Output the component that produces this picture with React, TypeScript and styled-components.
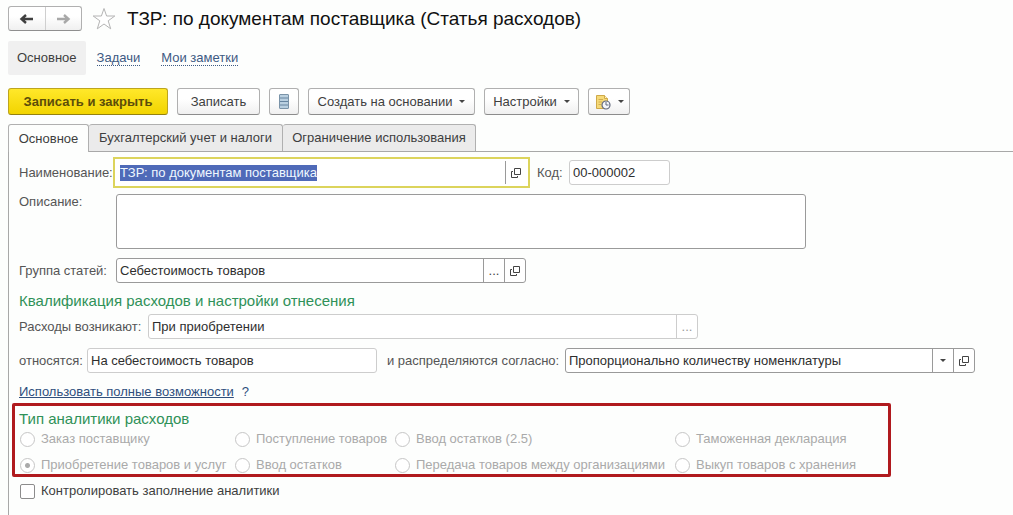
import React, { useEffect, useRef } from "react";
import styled, { createGlobalStyle, css } from "styled-components";

const GlobalStyle = createGlobalStyle`
  *, *::before, *::after { box-sizing: border-box; }
  html, body, #root { min-height: 100vh; }
  body {
    margin: 0;
    background: #fdfefd;
    color: #3e3e3e;
    font: 13px/16px "Liberation Sans", Arial, sans-serif;
  }
  #root { display: flex; }
  button, input, select, textarea { font: inherit; color: inherit; margin: 0; }
  h1, h2, p { margin: 0; font-weight: normal; }
`;

const Page = styled.div`
  flex: 1;
  min-width: 0;
  display: flex;
  flex-direction: column;
  padding: 6px 0 0 8px;
`;

const Header = styled.header`
  display: flex;
  align-items: center;
  height: 25px;
`;

const History = styled.div`
  display: flex;
  width: 74px;
  height: 25px;
  border: 1px solid #b0b0b0;
  border-bottom-color: #8f8f8f;
  border-radius: 3px;
  background: linear-gradient(#fff 40%, #f0f0f0);
`;

const HistoryButton = styled.button`
  flex: 1;
  display: flex;
  align-items: center;
  justify-content: center;
  padding: 0;
  border: 0;
  background: none;
  color: #404040;
  & + & {
    border-left: 1px solid #cfcfcf;
    color: #a8a8a8;
  }
`;

const StarButton = styled.button`
  display: flex;
  margin: 0 11px 0 10px;
  padding: 0;
  border: 0;
  background: none;
`;

const Title = styled.h1`
  color: #111;
  font-size: 19px;
  line-height: 24px;
`;

const Sections = styled.nav`
  display: flex;
  align-items: center;
  margin-top: 10px;
  height: 34px;
`;

const CurrentSection = styled.span`
  padding: 9px;
  margin-right: 11px;
  background: #f0f0f0;
  border-radius: 2px;
`;

const SectionLink = styled.a`
  margin-right: 21px;
  color: #3d5a83;
  text-decoration: none;
  line-height: 14px;
  border-bottom: 1px dotted #3d5a83;
`;

const Toolbar = styled.div`
  display: flex;
  gap: 9px;
  margin-top: 13px;
`;

const ToolButton = styled.button<{ $width: number; $primary?: boolean }>`
  display: flex;
  align-items: center;
  justify-content: center;
  gap: 7px;
  flex: 0 0 ${(p) => p.$width}px;
  height: 27px;
  padding: 0;
  border: 1px solid #b0b0b0;
  border-bottom-color: #8c8c8c;
  border-radius: 3px;
  background: linear-gradient(#fff 40%, #f0f0f0);
  white-space: nowrap;
  ${(p) =>
    p.$primary &&
    css`
      border-color: #bda51e;
      border-bottom-color: #94810f;
      background: linear-gradient(#ffe82a, #f2d400);
      color: #5c4d0a;
      font-weight: bold;
    `}
`;

const Caret = styled.span`
  border: 3px solid transparent;
  border-top-color: #444;
  border-bottom: 0;
`;

const Tabs = styled.div`
  display: flex;
  margin-top: 9px;
  border-bottom: 1px solid #a8a8a8;
`;

const Tab = styled.button<{ $width: number; $active?: boolean }>`
  flex: 0 0 ${(p) => p.$width}px;
  height: 27px;
  padding: 0;
  border: 1px solid #b0b0b0;
  border-width: 1px 1px 0 0;
  border-radius: 3px 3px 0 0;
  background: #ebebeb;
  ${(p) =>
    p.$active &&
    css`
      height: 28px;
      margin-bottom: -1px;
      border-left-width: 1px;
      background: #fdfefd;
    `}
`;

const Panel = styled.main`
  flex: 1;
  padding-top: 5px;
  border-left: 1px solid #a8a8a8;
`;

const Row = styled.div<{ $gap?: number; $top?: boolean }>`
  display: flex;
  align-items: ${(p) => (p.$top ? "flex-start" : "center")};
  margin-top: ${(p) => p.$gap ?? 0}px;
  padding-left: 10px;
`;

const Label = styled.label<{ $width: number; $indent?: number }>`
  flex: 0 0 ${(p) => p.$width}px;
  margin-left: ${(p) => p.$indent ?? 0}px;
  color: #555;
  white-space: nowrap;
`;

const Field = styled.div<{ $width: number; $muted?: boolean }>`
  display: flex;
  flex: 0 1 ${(p) => p.$width}px;
  min-width: 0;
  height: 25px;
  border: 1px solid ${(p) => (p.$muted ? "#cdcdcd" : "#9a9a9a")};
  border-radius: 3px;
  background: #fff;
  && > * + * {
    border-left: 1px solid ${(p) => (p.$muted ? "#cdcdcd" : "#9a9a9a")};
  }
`;

const FocusFrame = styled(Field)`
  height: 31px;
  margin-left: -3px;
  padding: 2px;
  border: 2px solid #dcd45c;
  border-radius: 0;
`;

const control = css`
  flex: 1;
  min-width: 0;
  padding: 0 3px;
  border: 0;
  outline: 0;
  background: none;
  color: #2e2e2e;
`;

const TextInput = styled.input`
  ${control}
  &::selection { background: #4f6ab8; color: #f0f8ff; }
`;

const Select = styled.select`
  ${control}
  appearance: none;
`;

const FieldButton = styled.button`
  display: flex;
  align-items: center;
  justify-content: center;
  flex: 0 0 21px;
  padding: 0;
  border: 0;
  background: none;
  color: #444;
  &:disabled { color: #999; }
`;

const CaretCell = styled.span`
  display: flex;
  align-items: center;
  justify-content: center;
  flex: 0 0 21px;
  pointer-events: none;
`;

const Description = styled.textarea`
  flex: 0 1 690px;
  min-width: 0;
  height: 55px;
  padding: 4px;
  border: 1px solid #9a9a9a;
  border-radius: 3px;
  background: #fff;
  resize: none;
`;

const sectionTitle = css`
  color: #2f9158;
  font-size: 15px;
  line-height: 20px;
`;

const Heading = styled.h2`
  ${sectionTitle}
  padding: 8px 0 3px 10px;
`;

const FullLink = styled.a`
  color: #2f4f7d;
`;

const HelpButton = styled.button`
  padding: 0;
  border: 0;
  margin-left: 8px;
  background: none;
  color: #2f4f7d;
`;

const Analytics = styled.fieldset`
  max-width: 879px;
  min-width: 0;
  margin: 3px 0 0 3px;
  padding: 3px 4px 1px;
  border: 3px solid #b01a1e;
  border-radius: 2px;
`;

const AnalyticsTitle = styled.h2`
  ${sectionTitle}
`;

const Options = styled.div`
  display: grid;
  grid-template-columns: 215px 160px 280px 1fr;
  row-gap: 10px;
  margin-top: 2px;
  padding-left: 1px;
`;

const Choice = styled.label<{ $muted?: boolean }>`
  display: flex;
  align-items: center;
  gap: 6px;
  color: ${(p) => (p.$muted ? "#aaa" : "#3e3e3e")};
  white-space: nowrap;
`;

const Radio = styled.input`
  appearance: none;
  width: 15px;
  height: 15px;
  border: 1px solid #c6c6c6;
  border-radius: 50%;
  background: #fff;
  &:checked { background: radial-gradient(circle, #aaa 2px, #fff 3px); }
`;

const Checkbox = styled.input`
  appearance: none;
  width: 15px;
  height: 15px;
  border: 1px solid #8c8c8c;
  border-radius: 2px;
  background: #fff;
`;

const CheckRow = styled.div`
  margin-top: 6px;
  padding-left: 11px;
`;

const Arrow = ({ flip }: { flip?: boolean }) => (
  <svg width="15" height="12" viewBox="0 0 15 12" aria-hidden="true">
    <path
      d={flip ? "M1 6H12M8 2L12.5 6L8 10" : "M14 6H3M7 2L2.5 6L7 10"}
      fill="none"
      stroke="currentColor"
      strokeWidth="2.4"
    />
  </svg>
);

const Star = () => (
  <svg width="24" height="24" viewBox="0 0 24 24" aria-hidden="true">
    <path
      d="M12 1.5L14.6 9H22.8L16.2 13.8L18.7 21.8L12 17L5.3 21.8L7.8 13.8L1.2 9H9.4Z"
      fill="#fff"
      stroke="#b4b4b4"
    />
  </svg>
);

const ListIcon = () => (
  <svg width="10" height="15" viewBox="0 0 10 15" aria-hidden="true">
    <rect x="0.5" y="0.5" width="9" height="14" rx="0.5" fill="#b9cfe0" stroke="#7a93a8" />
    <path d="M1 4H9M1 7.500H9M1 11H9" stroke="#6684a0" />
  </svg>
);

const ReportIcon = () => (
  <svg width="16" height="16" viewBox="0 0 16 16" aria-hidden="true">
    <path d="M1.500 1.500H9.500L12.500 4.500V14.500H1.500Z" fill="#f6da78" stroke="#cfa94a" />
    <path d="M9.500 1.500V4.500H12.500" fill="#fff3c4" stroke="#cfa94a" />
    <path d="M3.500 5.500H8M3.500 8H7M3.500 10.500H6" stroke="#d3ad50" />
    <circle cx="11" cy="11" r="4" fill="#f4f6fa" stroke="#61687c" strokeWidth="1.200" />
    <path d="M11 8V11H13.500" fill="none" stroke="#61687c" />
  </svg>
);

const OpenIcon = () => (
  <svg width="10" height="10" viewBox="0 0 10 10" aria-hidden="true" fill="none" stroke="#444">
    <path d="M3.500 0.500H9.500V6.500H3.500Z" />
    <path d="M2 3.500H0.500V9.500H6.500V8" />
  </svg>
);

const OpenButton = () => (
  <FieldButton type="button" aria-label="Открыть">
    <OpenIcon />
  </FieldButton>
);

const options = [
  "Заказ поставщику",
  "Поступление товаров",
  "Ввод остатков (2.5)",
  "Таможенная декларация",
  "Приобретение товаров и услуг",
  "Ввод остатков",
  "Передача товаров между организациями",
  "Выкуп товаров с хранения",
];

export default function App() {
  const nameRef = useRef<HTMLInputElement>(null);

  useEffect(() => {
    nameRef.current?.focus();
    nameRef.current?.select();
  }, []);

  return (
    <>
      <GlobalStyle />
      <Page>
        <Header>
          <History>
            <HistoryButton type="button" aria-label="Назад"><Arrow /></HistoryButton>
            <HistoryButton type="button" aria-label="Вперед"><Arrow flip /></HistoryButton>
          </History>
          <StarButton type="button" aria-label="В избранное"><Star /></StarButton>
          <Title>ТЗР: по документам поставщика (Статья расходов)</Title>
        </Header>

        <Sections>
          <CurrentSection>Основное</CurrentSection>
          <SectionLink href="#tasks">Задачи</SectionLink>
          <SectionLink href="#notes">Мои заметки</SectionLink>
        </Sections>

        <Toolbar>
          <ToolButton type="button" $width={160} $primary>Записать и закрыть</ToolButton>
          <ToolButton type="button" $width={83}>Записать</ToolButton>
          <ToolButton type="button" $width={30} aria-label="Список"><ListIcon /></ToolButton>
          <ToolButton type="button" $width={167} aria-haspopup="menu">
            Создать на основании <Caret />
          </ToolButton>
          <ToolButton type="button" $width={95} aria-haspopup="menu">
            Настройки <Caret />
          </ToolButton>
          <ToolButton type="button" $width={42} aria-haspopup="menu" aria-label="Отчеты">
            <ReportIcon /> <Caret />
          </ToolButton>
        </Toolbar>

        <Tabs role="tablist">
          <Tab type="button" role="tab" aria-selected $width={81} $active>Основное</Tab>
          <Tab type="button" role="tab" $width={194}>Бухгалтерский учет и налоги</Tab>
          <Tab type="button" role="tab" $width={193}>Ограничение использования</Tab>
        </Tabs>

        <Panel>
          <Row>
            <Label htmlFor="name" $width={97}>Наименование:</Label>
            <FocusFrame $width={417}>
              <TextInput id="name" ref={nameRef} defaultValue="ТЗР: по документам поставщика" />
              <OpenButton />
            </FocusFrame>
            <Label htmlFor="code" $width={32} $indent={7}>Код:</Label>
            <Field $width={101} $muted>
              <TextInput id="code" defaultValue="00-000002" />
            </Field>
          </Row>

          <Row $gap={6} $top>
            <Label htmlFor="description" $width={97}>Описание:</Label>
            <Description id="description" />
          </Row>

          <Row $gap={9}>
            <Label htmlFor="group" $width={97}>Группа статей:</Label>
            <Field $width={410}>
              <TextInput id="group" defaultValue="Себестоимость товаров" />
              <FieldButton type="button" aria-label="Выбрать">...</FieldButton>
              <OpenButton />
            </Field>
          </Row>

          <Heading>Квалификация расходов и настройки отнесения</Heading>

          <Row>
            <Label htmlFor="origin" $width={129}>Расходы возникают:</Label>
            <Field $width={550} $muted>
              <TextInput id="origin" readOnly defaultValue="При приобретении" />
              <FieldButton type="button" disabled aria-label="Выбрать">...</FieldButton>
            </Field>
          </Row>

          <Row $gap={9}>
            <Label htmlFor="target" $width={68}>относятся:</Label>
            <Field $width={290} $muted>
              <TextInput id="target" readOnly defaultValue="На себестоимость товаров" />
            </Field>
            <Label htmlFor="rule" $width={178} $indent={10}>и распределяются согласно:</Label>
            <Field $width={410}>
              <Select id="rule">
                <option>Пропорционально количеству номенклатуры</option>
              </Select>
              <CaretCell><Caret /></CaretCell>
              <OpenButton />
            </Field>
          </Row>

          <Row $gap={11}>
            <FullLink href="#full">Использовать полные возможности</FullLink>
            <HelpButton type="button" aria-label="Справка">?</HelpButton>
          </Row>

          <Analytics aria-labelledby="analytics-title">
            <AnalyticsTitle id="analytics-title">Тип аналитики расходов</AnalyticsTitle>
            <Options>
              {options.map((text, i) => (
                <Choice key={text} $muted>
                  <Radio type="radio" name="analytics" disabled defaultChecked={i === 4} />
                  {text}
                </Choice>
              ))}
            </Options>
          </Analytics>

          <CheckRow>
            <Choice>
              <Checkbox type="checkbox" />
              Контролировать заполнение аналитики
            </Choice>
          </CheckRow>
        </Panel>
      </Page>
    </>
  );
}
